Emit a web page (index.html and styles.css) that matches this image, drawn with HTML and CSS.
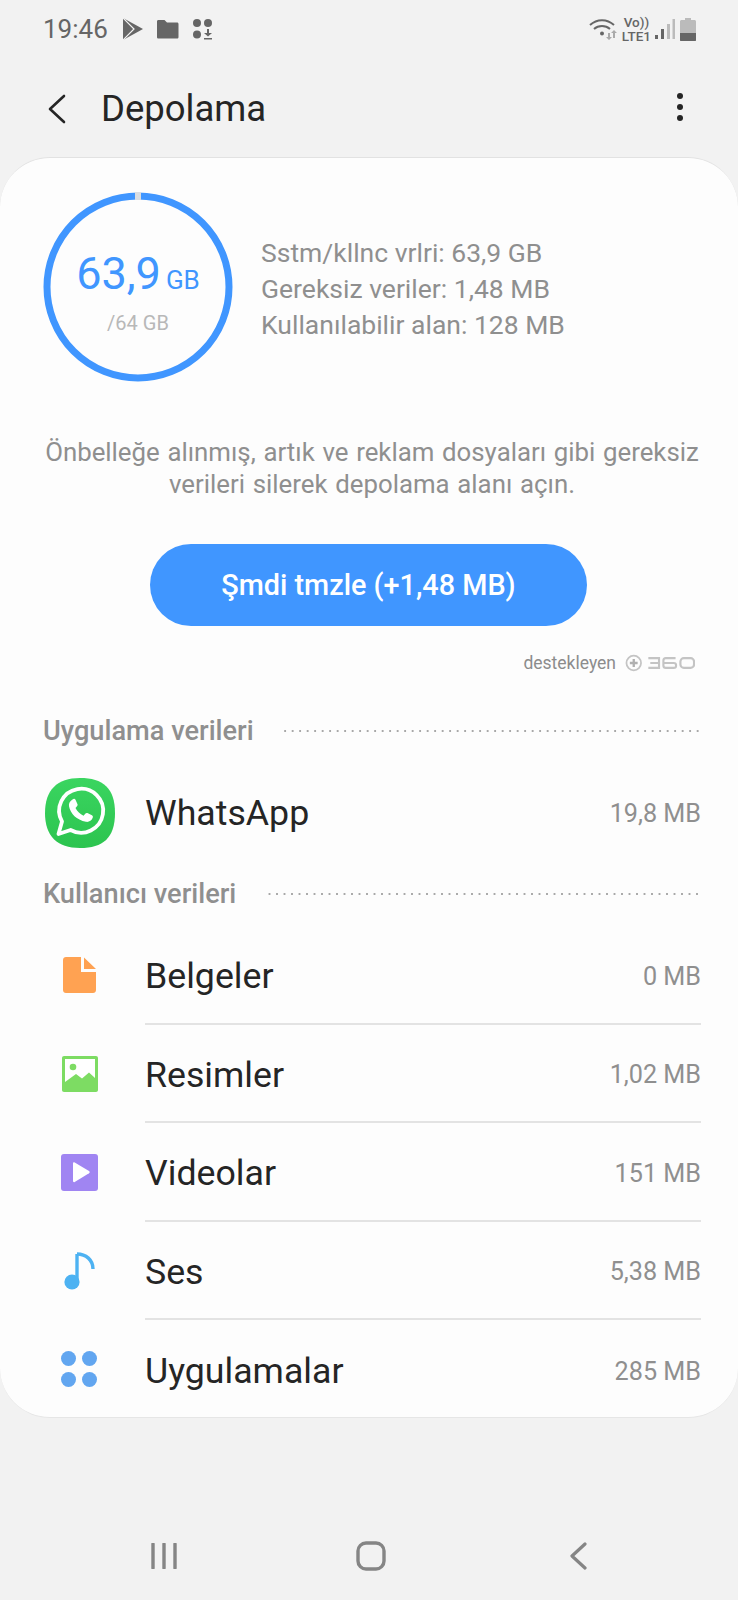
FILE: index.html
```html
<!DOCTYPE html>
<html lang="tr">
  <head>
    <meta charset="UTF-8" />
    <meta name="viewport" content="width=device-width, initial-scale=1.0" />
    <title>Depolama</title>
    <link rel="stylesheet" href="styles.css">
  </head>
  <body>
    <div class="phone">
      <div class="statusbar">
        <div class="status-left">
          <span class="time">19:46</span>
          <svg class="st-play" width="20" height="22" viewBox="0 0 20 22"><path d="M0 0l20 11L0 22z" fill="#666"/><path d="M0 0l11 11L0 22" fill="none" stroke="#f2f2f2" stroke-width="1.200"/></svg>
          <svg class="st-folder" width="23" height="20" viewBox="0 0 23 20"><path d="M1 2.500C1 1.500 1.600 1 2.500 1h6l2.500 2.500h10c1 0 1.500.6 1.500 1.500v13c0 1-.6 1.500-1.500 1.500h-18.500C1.600 19.500 1 19 1 18z" fill="#666"/></svg>
          <svg class="st-apps" width="22" height="22" viewBox="0 0 22 22"><g fill="#666"><circle cx="5" cy="5" r="4"/><circle cx="16" cy="5" r="4"/><circle cx="5" cy="16.500" r="4"/><path d="M15 11h2v4h3l-4 3.500-4-3.500h3zM12 20h8v1.500h-8z"/></g></svg>
        </div>
        <div class="status-right">
          <svg class="st-wifi" width="30" height="22" viewBox="0 0 30 22"><g fill="none" stroke="#666" stroke-width="2"><path d="M1 7c7-6.500 17-6.500 24 0"/><path d="M5 11c4.500-4 11.500-4 16 0"/></g><circle cx="13" cy="15.500" r="2" fill="#666"/><path d="M19 15h2v4h2l-3 3-3-3h2zM25 12l3 3h-2v5h-2v-5h-2z" fill="#aaa"/></svg>
          <span class="volte"><span>Vo))</span><span>LTE1</span></span>
          <svg class="st-signal" width="20" height="22" viewBox="0 0 20 22"><rect x="0" y="17" width="3" height="4" fill="#666"/><rect x="6" y="11" width="3" height="10" fill="#666"/><rect x="12" y="6" width="3" height="15" fill="#bbb"/><rect x="17.500" y="1" width="2.500" height="20" fill="#bbb"/></svg>
          <svg class="st-batt" width="16" height="23" viewBox="0 0 16 23"><path d="M5 0h6v2h3.500c.8 0 1.500.7 1.500 1.500V22c0 .6-.5 1-1 1H1c-.5 0-1-.4-1-1V3.500C0 2.700.7 2 1.500 2H5z" fill="#bbb"/><path d="M0 15h16v7c0 .6-.5 1-1 1H1c-.5 0-1-.4-1-1z" fill="#666"/></svg>
        </div>
      </div>

      <div class="appbar">
        <svg class="back" width="20" height="30" viewBox="0 0 20 30"><path d="M17 2L3 15l14 13" fill="none" stroke="#252525" stroke-width="2.600" stroke-linecap="round" stroke-linejoin="round"/></svg>
        <h1>Depolama</h1>
        <div class="more"><i></i><i></i><i></i></div>
      </div>

      <div class="card">
        <div class="summary">
          <div class="ring">
            <svg width="190" height="190" viewBox="0 0 190 190">
              <circle cx="95" cy="95" r="91" fill="none" stroke="#4096ff" stroke-width="7"/>
              <rect x="92" y="0" width="6" height="8" fill="#d9dde2"/>
            </svg>
            <div class="ring-text">
              <div class="used">63,9<small>GB</small></div>
              <div class="total">/64 GB</div>
            </div>
          </div>
          <div class="stats">
            <div>Sstm/kllnc vrlri: 63,9 GB</div>
            <div>Gereksiz veriler: 1,48 MB</div>
            <div>Kullanılabilir alan: 128 MB</div>
          </div>
        </div>

        <p class="hint">Önbelleğe alınmış, artık ve reklam dosyaları gibi gereksiz<br />verileri silerek depolama alanı açın.</p>

        <button class="clean">Şmdi tmzle (+1,48 MB)</button>

        <div class="powered">
          <span>destekleyen</span>
          <svg width="70" height="18" viewBox="0 0 72 18">
            <circle cx="9" cy="9" r="7.500" fill="none" stroke="#c4c4c4" stroke-width="1.800"/>
            <path d="M9 5v8M5 9h8" stroke="#b0b0b0" stroke-width="2.400"/>
            <g fill="none" stroke="#c4c4c4" stroke-width="2.200">
              <path d="M24 4h11v10H24M26 9h9"/>
              <path d="M52 4H42c-1.500 0-2.500 1-2.500 2.500v5c0 1.500 1 2.500 2.500 2.500h8c1.500 0 2.500-1 2.500-2v-1c0-1.200-1-2-2.500-2h-10"/>
              <rect x="57" y="4" width="14" height="10" rx="3.500"/>
            </g>
          </svg>
        </div>

        <div class="section"><span>Uygulama verileri</span><i class="dots"></i></div>
        <div class="row row-app">
          <div class="ico">
            <svg width="70" height="70" viewBox="0 0 70 70">
              <defs><linearGradient id="wa" x1="0" y1="0" x2="0" y2="1"><stop offset="0" stop-color="#3ad560"/><stop offset="1" stop-color="#2cc44f"/></linearGradient></defs>
              <path d="M35 0C58 0 70 10 70 35S58 70 35 70 0 58 0 35 12 0 35 0z" fill="url(#wa)"/>
              <path d="M13.500 56l3.500-12.500a22 22 0 1 1 8.600 8.500z" fill="none" stroke="#fff" stroke-width="3.800" stroke-linejoin="round"/>
              <path d="M27.500 21.500c1-1 2.500-1 3 .2l2 4.500c.3.800 0 1.400-.5 2l-1.500 1.800c1.800 3.400 4.500 6 8 7.700l2-2.200c.6-.6 1.200-.7 1.900-.4l4.500 2.200c1 .5 1.200 1.300.8 2.500-1 3-4 4.500-6.700 4-9.500-1.800-15.500-8-17-15.500-.4-2.800.7-5 3.500-6.800z" fill="#fff"/>
            </svg>
          </div>
          <div class="row-body"><span class="name">WhatsApp</span><span class="size">19,8 MB</span></div>
        </div>

        <div class="section section-user"><span>Kullanıcı verileri</span><i class="dots"></i></div>
        <div class="row">
          <div class="ico ico-doc">
            <svg width="34" height="38" viewBox="0 0 34 38"><path d="M3 1h15v15h15v18c0 1.700-1.300 3-3 3H3c-1.700 0-3-1.300-3-3V4c0-1.700 1.300-3 3-3zM21 1.500L33 13H21z" fill="#ffa252"/></svg>
          </div>
          <div class="row-body line"><span class="name">Belgeler</span><span class="size">0 MB</span></div>
        </div>
        <div class="row">
          <div class="ico ico-pic">
            <svg width="36" height="36" viewBox="0 0 36 36"><path d="M2 0h32c1.100 0 2 .9 2 2v32c0 1.100-.9 2-2 2H2c-1.100 0-2-.9-2-2V2C0 .9.900 0 2 0z" fill="#7ddc63"/><path d="M3 3h30v19l-6-5.500-7 6-6-4.500-11 8z" fill="#fff"/><circle cx="11" cy="11" r="3.300" fill="#7ddc63"/></svg>
          </div>
          <div class="row-body line"><span class="name">Resimler</span><span class="size">1,02 MB</span></div>
        </div>
        <div class="row">
          <div class="ico">
            <svg width="37" height="37" viewBox="0 0 37 37"><rect width="37" height="37" rx="3" fill="#a085f2"/><path d="M12 9.500c0-1 .8-1.500 1.700-1L28 17c.9.600.9 1.700 0 2.300L13.700 28c-.9.500-1.700 0-1.700-1z" fill="#fff"/></svg>
          </div>
          <div class="row-body line"><span class="name">Videolar</span><span class="size">151 MB</span></div>
        </div>
        <div class="row">
          <div class="ico ico-note">
            <svg width="32" height="38" viewBox="0 0 32 38"><path d="M13 2v26" stroke="#4db2f2" stroke-width="3.400" fill="none"/><path d="M13 2c9 0 16 6 16 15" stroke="#4db2f2" stroke-width="3.400" fill="none"/><circle cx="8" cy="30" r="7.600" fill="#4db2f2"/></svg>
          </div>
          <div class="row-body line"><span class="name">Ses</span><span class="size">5,38 MB</span></div>
        </div>
        <div class="row">
          <div class="ico">
            <svg width="36" height="36" viewBox="0 0 36 36"><g fill="#62a6f0"><circle cx="7.500" cy="7.500" r="7.500"/><circle cx="28.500" cy="7.500" r="7.500"/><circle cx="7.500" cy="28.500" r="7.500"/><circle cx="28.500" cy="28.500" r="7.500"/></g></svg>
          </div>
          <div class="row-body"><span class="name">Uygulamalar</span><span class="size">285 MB</span></div>
        </div>
      </div>

      <div class="navbar">
        <svg width="26" height="26" viewBox="0 0 26 26"><path d="M2 1v24M13 1v24M24 1v24" stroke="#858585" stroke-width="3.400" stroke-linecap="round"/></svg>
        <svg class="nav-home" width="30" height="30" viewBox="0 0 30 30"><rect x="2" y="2" width="26" height="26" rx="8" fill="none" stroke="#858585" stroke-width="3.400"/></svg>
        <svg width="18" height="28" viewBox="0 0 18 28"><path d="M16 2L3 14l13 12" fill="none" stroke="#858585" stroke-width="3.200" stroke-linecap="round" stroke-linejoin="round"/></svg>
      </div>
    </div>
  </body>
</html>
```

FILE: styles.css
```css
* {
  box-sizing: border-box;
}
html,
body {
  margin: 0;
  padding: 0;
}
body {
  background: #f2f2f2;
  font-family: Roboto, "Noto Sans", sans-serif;
  color: #252525;
}
.phone {
  width: 738px;
  height: 1600px;
  display: flex;
  flex-direction: column;
}
.statusbar {
  height: 60px;
  padding: 0 42px 2px 43px;
  display: flex;
  justify-content: space-between;
  align-items: center;
}
.status-left,
.status-right {
  display: flex;
  align-items: center;
}
.time {
  font-size: 26px;
  color: #666;
  margin-right: 15px;
}
.st-play {
  margin-right: 13px;
}
.st-folder {
  margin-right: 13px;
}
.st-wifi {
  margin-right: 3px;
}
.volte {
  display: flex;
  flex-direction: column;
  align-items: center;
  font-size: 13.5px;
  line-height: 14px;
  font-weight: 500;
  color: #666;
}
.st-signal {
  margin-left: 4px;
}
.st-batt {
  margin-left: 5px;
}
.appbar {
  height: 97px;
  padding: 0 55px 0 47px;
  display: flex;
  align-items: center;
}
.back {
  margin-right: 34px;
}
.appbar h1 {
  flex: 1;
  margin: 0;
  font-size: 36.5px;
  font-weight: 400;
}
.more {
  display: flex;
  flex-direction: column;
  gap: 5px;
  margin-bottom: 4px;
}
.more i {
  width: 6px;
  height: 6px;
  border-radius: 50%;
  background: #252525;
}
.card {
  height: 1261px;
  background: #fdfdfd;
  border-radius: 50px;
  border-top: 1px solid #e2e2e2;
  border-bottom: 1px solid #e6e6e6;
  padding: 34px 37px 0 43px;
}
.summary {
  display: flex;
  align-items: center;
  gap: 28px;
}
.ring {
  position: relative;
  width: 190px;
  height: 190px;
}
.ring svg {
  display: block;
}
.ring-text {
  position: absolute;
  inset: 0;
  padding-top: 9px;
  display: flex;
  flex-direction: column;
  align-items: center;
  justify-content: center;
}
.used {
  font-size: 45px;
  color: #4096ff;
  line-height: 50px;
}
.used small {
  font-size: 26px;
  margin-left: 5px;
}
.total {
  font-size: 20px;
  color: #b8b8b8;
  margin-top: 6px;
}
.stats {
  margin-top: 4px;
  font-size: 26.5px;
  line-height: 36px;
  color: #8f8f8f;
}
.hint {
  margin: 54px -6px 0 -6px;
  text-align: center;
  font-size: 25.8px;
  word-spacing: 1.300px;
  line-height: 32px;
  color: #8f8f8f;
}
.clean {
  display: block;
  width: 437px;
  height: 82px;
  margin: 44px 0 0 107px;
  border: 0;
  border-radius: 41px;
  background: #4096ff;
  color: #fff;
  font-family: inherit;
  font-size: 28.8px;
  font-weight: 500;
}
.powered {
  margin-top: 26px;
  height: 22px;
  padding-right: 6px;
  display: flex;
  justify-content: flex-end;
  align-items: center;
  gap: 9px;
  font-size: 17.5px;
  color: #8c8c8c;
}
.section {
  display: flex;
  align-items: center;
  gap: 28px;
  font-size: 27.2px;
  font-weight: 500;
  color: #8f8f8f;
  margin-top: 40px;
  height: 34px;
}
.section-user {
  margin-top: 15px;
  margin-bottom: 15px;
}
.dots {
  flex: 1;
  height: 2px;
  background-image: radial-gradient(circle, #a8a8a8 1px, transparent 1.100px);
  background-size: 7.500px 2px;
  background-position: right center;
}
.row {
  display: flex;
  height: 98.500px;
  align-items: stretch;
}
.row-app {
  height: 98px;
  margin-top: 16px;
}
.ico {
  width: 102px;
  flex: none;
  display: flex;
  align-items: center;
  justify-content: flex-start;
}
.ico svg {
  margin-left: 18px;
}
.ico-doc svg {
  margin-left: 20px;
}
.ico-note svg {
  margin-left: 21px;
}
.ico-pic svg {
  margin-left: 19px;
}
.row-app .ico svg {
  margin-left: 2px;
}
.row-body {
  flex: 1;
  display: flex;
  justify-content: space-between;
  align-items: center;
  padding-top: 4px;
}
.row-app .row-body {
  padding-top: 0;
}
.line {
  border-bottom: 2px solid #e3e3e3;
}
.name {
  font-size: 35.7px;
  color: #252525;
}
.size {
  font-size: 25.2px;
  color: #8f8f8f;
}
.navbar {
  flex: 1;
  padding: 93px 151px 0 151px;
  display: flex;
  justify-content: space-between;
  align-items: center;
}
.nav-home {
  margin-right: 5px;
}
```
